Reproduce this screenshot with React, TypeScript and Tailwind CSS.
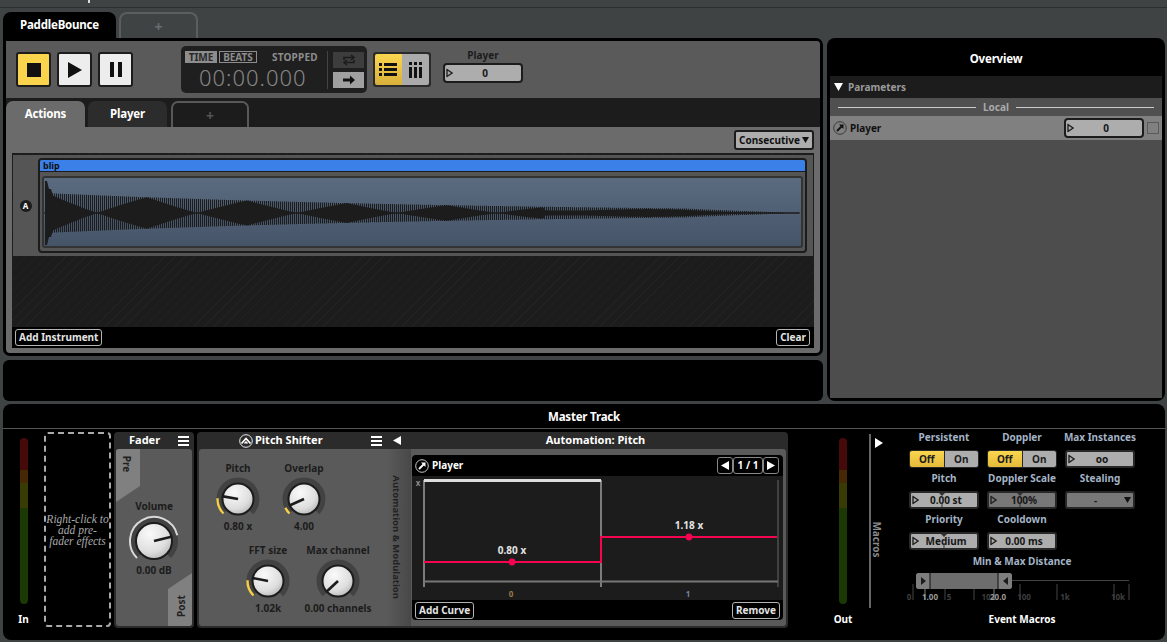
import React from "react";

const F = { fontFamily: '"Noto Sans", "Open Sans", sans-serif' };

function polar(r: number, deg: number) {
  const a = ((deg - 90) * Math.PI) / 180;
  return [r * Math.cos(a), r * Math.sin(a)];
}
function arc(r: number, from: number, to: number) {
  const [x1, y1] = polar(r, from);
  const [x2, y2] = polar(r, to);
  const large = Math.abs(to - from) > 180 ? 1 : 0;
  return `M${x1} ${y1}A${r} ${r} 0 ${large} 1 ${x2} ${y2}`;
}

function Knob({ id, angle, arcTo, big, color = "#f5cf45" }: { id: string; angle: number; arcTo?: number; big?: boolean; color?: string }) {
  const r = big ? 18 : 15.5;
  const tr = big ? 21 : 18.5;
  const [px, py] = polar(r + 1, angle);
  return (
    <svg width="54" height="54" viewBox="-27 -27 54 54" className="block">
      <defs>
        <radialGradient id={id} cx="0.38" cy="0.3" r="0.85">
          <stop offset="0" stopColor="#fafafa" />
          <stop offset="0.6" stopColor="#dedede" />
          <stop offset="1" stopColor="#a8a8a8" />
        </radialGradient>
      </defs>
      <path d={arc(tr, -135, 135)} fill="none" stroke="#424242" strokeWidth="6" />
      {arcTo !== undefined && <path d={arc(big ? 24 : 20.5, -135, arcTo)} fill="none" stroke={color} strokeWidth={big ? 2 : 2.4} />}
      <circle r={r} fill={`url(#${id})`} stroke="#1c1c1c" strokeWidth="2" />
      <line x1="0" y1="0" x2={px} y2={py} stroke="#1c1c1c" strokeWidth="2.6" />
    </svg>
  );
}

function Tri({ className = "" }: { className?: string }) {
  return (
    <svg width="7" height="9" viewBox="0 0 7 9" className={className}>
      <path d="M1 1L6 4.5L1 8Z" fill="none" stroke="#222" strokeWidth="1.4" />
    </svg>
  );
}

function Slider({ value, w, tall, dark, notch, round }: { value: string; w: string; tall?: boolean; dark?: boolean; notch?: number; round?: boolean }) {
  return (
    <div className={`${w} relative flex items-center justify-center ${tall ? "h-[20px]" : "h-[18px]"} ${round ? "rounded-[4px] border-2 border-[#1c1c1c]" : "rounded-[3px] border-2 border-[#282828]"} ${dark ? "bg-[#787878]" : "bg-[#adadad]"}`}>
      <Tri className="absolute left-[1px] top-1/2 -translate-y-1/2" />
      <span className="pl-[4px] text-[10px] font-bold leading-none text-[#161616]">{value}</span>
      {notch !== undefined && (
        <svg width="6" height="14" viewBox="0 0 6 14" className="absolute top-0" style={{ left: notch }}>
          <path d="M0 0H6L3 3Z" fill="#333" />
          <path d="M3 10V14" stroke="#333" />
        </svg>
      )}
    </div>
  );
}

function Toggle() {
  return (
    <div className="flex h-[18px] w-[70px] gap-[1px] rounded-[3px] bg-[#282828] p-[1px] text-[10px] font-bold leading-none">
      <div className="flex flex-1 items-center justify-center rounded-l-[2px] bg-gradient-to-b from-[#fbd64f] to-[#e4b93a] text-[#1c1c1c]">Off</div>
      <div className="flex flex-1 items-center justify-center rounded-r-[2px] bg-[#adadad] text-[#1c1c1c]">On</div>
    </div>
  );
}

function Meter() {
  return (
    <div className="flex h-[166px] w-[8px] flex-col overflow-hidden rounded-[4px]">
      <div className="h-[32px] bg-[#460a0a]" />
      <div className="h-[13px] bg-[#462806]" />
      <div className="h-[25px] bg-[#393b05]" />
      <div className="flex-1 bg-[#1c3805]" />
    </div>
  );
}

function LinkIcon({ dark, size = 14 }: { dark?: boolean; size?: number }) {
  const c = dark ? "#111" : "#fff";
  return (
    <svg width={size} height={size} viewBox="0 0 14 14" className="shrink-0">
      <circle cx="7" cy="7" r="6.3" fill="none" stroke={dark ? "#333" : "#ddd"} strokeWidth="0.9" />
      <path d="M4 10L8.5 5.5" stroke={c} strokeWidth="1.8" />
      <path d="M6 3.5H10.5V8Z" fill={c} />
    </svg>
  );
}

function Waveform() {
  const W = 756;
  const H = 70;
  const c = 35;
  const amp = (x: number) => {
    const a = 20 * Math.exp(-x / 430) * Math.min(1, Math.max(0, (760 - x) / 120));
    return Math.max(a, 0.3);
  };
  let stripes = "";
  for (let x = 6; x < 740; x += 2) {
    const a = amp(x);
    stripes += `M${x + 0.5} ${c - a}V${c + a}`;
  }
  const pts = (sign: number) => {
    const o: string[] = [];
    for (let x = 1; x < W; x += 2) {
      const a = amp(x);
      const p = (((x - 3) % 100) + 100) % 100;
      const tri = Math.abs(p - 50) / 50;
      const beat = x < 500 ? tri : 0.6 + 0.2 * Math.sin(x / 30);
      const v = x < 4 ? 32 : x < 8 ? 24 : Math.max(a * beat, 0.5);
      o.push(`${x} ${c + sign * v}`);
    }
    return o;
  };
  const top = pts(-1);
  const bot = pts(1).reverse();
  const solid = `M${top.join("L")}L${bot.join("L")}Z`;
  return (
    <svg width={W} height={H} viewBox={`0 0 ${W} ${H}`} className="block">
      <path d={stripes} stroke="#1c1c1c" strokeWidth="1.1" fill="none" />
      <path d={solid} fill="#1c1c1c" />
      <path d={`M0 ${c}H${W}`} stroke="#1c1c1c" strokeWidth="1" />
    </svg>
  );
}

function Graph() {
  return (
    <svg width="371" height="124" viewBox="0 0 371 124" className="block" fontFamily='"Noto Sans", sans-serif' fontWeight="700" fontSize="10">
      <rect width="371" height="124" fill="#1c1c1c" />
      <path d="M12 4.5H189" stroke="#dcdcdc" strokeWidth="3" />
      <path d="M12 4V111M189 4V111" stroke="#dcdcdc" strokeWidth="1" />
      <path d="M366 4V111" stroke="#666" strokeWidth="1" />
      <path d="M12 105.5H366" stroke="#777" strokeWidth="2" />
      <path d="M12 86H189V61H365" fill="none" stroke="#f5054f" strokeWidth="2" />
      <circle cx="100" cy="86" r="3.4" fill="#f5054f" />
      <circle cx="277" cy="61" r="3.4" fill="#f5054f" />
      <text x="100" y="78" textAnchor="middle" fill="#e4e4e4">0.80 x</text>
      <text x="277" y="53" textAnchor="middle" fill="#e4e4e4">1.18 x</text>
      <text x="6" y="10" textAnchor="middle" fill="#8a8a8a" fontSize="8">x</text>
      <text x="99" y="121" textAnchor="middle" fill="#99794a" fontSize="8">0</text>
      <text x="276" y="121" textAnchor="middle" fill="#6f8aa0" fontSize="8">1</text>
    </svg>
  );
}

function DistanceScale() {
  const ticks = [913, 925, 945, 974, 994, 1020, 1057, 1114, 1129];
  const labels: [string, number][] = [["0", 909], ["1.00", 930], ["5", 949], ["10", 986], ["20.0", 998], ["100", 1024], ["1k", 1065], ["10k", 1118]];
  return (
    <svg width="240" height="32" viewBox="905 571 240 32" className="block" fontFamily='"Noto Sans", sans-serif' fontSize="8" fontWeight="700">
      <path d="M1008 580.5H1129" stroke="#444" />
      {ticks.map((t) => (
        <path key={t} d={`M${t} 584V600`} stroke={t === 925 || t === 994 ? "#555" : "#2e2e2e"} strokeWidth="1.5" />
      ))}
      <rect x="916" y="573" width="96" height="16" rx="3" fill="#6d6d6d" />
      <rect x="916" y="573" width="14" height="16" rx="3" fill="#7e7e7e" />
      <rect x="998" y="573" width="14" height="16" rx="3" fill="#7e7e7e" />
      <path d="M930 573V589M998 573V589" stroke="#111" strokeWidth="1" />
      <path d="M921 577L926 581L921 585Z" fill="#1c1c1c" />
      <path d="M1008 577L1003 581L1008 585Z" fill="#1c1c1c" />
      {labels.map(([l, x]) => (
        <text key={l} x={x} y="600" textAnchor="middle" fill={l === "1.00" || l === "20.0" ? "#9a9a9a" : "#3f3f3f"}>{l}</text>
      ))}
    </svg>
  );
}

function Dial({ id, label, value, angle, arcTo }: { id: string; label: string; value: string; angle: number; arcTo?: number }) {
  return (
    <div className="flex w-[66px] flex-col items-center">
      <div className="h-[14px] whitespace-nowrap text-[10px] font-bold leading-[14px] text-[#1c1c1c]">{label}</div>
      <div className="mb-[-7px] mt-[-3px]"><Knob id={id} angle={angle} arcTo={arcTo} /></div>
      <div className="relative h-[14px] whitespace-nowrap text-[10px] font-bold leading-[14px] text-[#1c1c1c]">{value}</div>
    </div>
  );
}

function Cell({ label, children }: { label: string; children?: React.ReactNode }) {
  return (
    <div className="flex h-[41px] w-[78px] flex-col items-center">
      <div className="mb-[5px] flex h-[15px] items-center whitespace-nowrap text-[10px] font-bold text-[#a4b4c6]">{label}</div>
      {children}
    </div>
  );
}

function Hamburger() {
  return (
    <div className="flex w-[11px] shrink-0 flex-col gap-[2px]">
      <div className="h-[2px] bg-white" />
      <div className="h-[2px] bg-white" />
      <div className="h-[2px] bg-white" />
    </div>
  );
}

function SmallBtn({ children }: { children: React.ReactNode }) {
  return <div className="flex h-[17px] items-center rounded-[3px] border border-[#b4b4b4] bg-black px-[3px] text-[10px] font-bold text-[#e4e4e4]">{children}</div>;
}

export default function App() {
  return (
    <div style={F} className="flex h-[642px] w-[1167px] flex-col overflow-hidden bg-[#3f4344]">
      <div className="h-[8px] shrink-0 border-b border-[#2c2f30]">
        <div className="ml-[88px] h-[3px] w-[2px] bg-[#ddd]" />
      </div>

      <div className="mt-[4px] flex h-[26px] shrink-0 gap-[3px] pl-[3px]">
        <div className="flex w-[113px] items-center justify-center rounded-t-[8px] bg-black text-[11.5px] font-bold tracking-[-0.2px] text-white">PaddleBounce</div>
        <div className="flex w-[79px] items-center justify-center rounded-t-[8px] border-2 border-b-0 border-[#5a5e5f] text-[14px] font-bold text-[#6a6e6f]">+</div>
      </div>

      <div className="flex h-[363px] shrink-0 gap-[4px] pl-[3px]">
        <div className="flex w-[820px] flex-col gap-[4px]">
          <div className="flex h-[318px] flex-col overflow-hidden rounded-[7px] rounded-tl-none border-[3px] border-black bg-[#6b6b6b]">
            <div className="flex h-[57px] shrink-0 items-center bg-[#5a5a5a] pl-[10px]">
              <div className="flex h-[35px] w-[35px] items-center justify-center rounded-[3px] border-2 border-[#1c1c1c] bg-[#f9d44c]">
                <div className="h-[14px] w-[14px] bg-[#111]" />
              </div>
              <div className="ml-[6px] flex h-[35px] w-[35px] items-center justify-center rounded-[3px] border-2 border-[#1c1c1c] bg-[#ededed]">
                <svg width="16" height="18" viewBox="0 0 16 18"><path d="M1 1L15 9L1 17Z" fill="#111" /></svg>
              </div>
              <div className="ml-[6px] flex h-[35px] w-[35px] items-center justify-center gap-[4px] rounded-[3px] border-2 border-[#1c1c1c] bg-[#ededed]">
                <div className="h-[15px] w-[4px] bg-[#111]" />
                <div className="h-[15px] w-[4px] bg-[#111]" />
              </div>

              <div className="ml-[48px] flex h-[47px] w-[186px] items-center rounded-[5px] bg-[#1f1f1f] pl-[4px]">
                <div className="w-[142px] pt-[2px]">
                  <div className="flex items-center text-[10px] font-bold leading-none">
                    <div className="flex h-[12px] w-[32px] items-center justify-center bg-[#8d8d8d] text-[#2a2a2a]">TIME</div>
                    <div className="ml-[2px] flex h-[12px] w-[38px] items-center justify-center border border-[#8d8d8d] text-[#8d8d8d]">BEATS</div>
                    <div className="ml-[15px] tracking-[0.2px] text-[#8d8d8d]">STOPPED</div>
                  </div>
                  <div className="pl-[14px] text-[22px] font-light leading-[28px] tracking-[1px] text-[#868686]">00:00.000</div>
                </div>
                <div className="h-[38px] w-px bg-[#444]" />
                <div className="ml-[5px] flex flex-col gap-[4px]">
                  <div className="flex h-[16px] w-[31px] items-center justify-center bg-[#3d3d3d]">
                    <svg width="14" height="12" viewBox="0 0 14 12" fill="none" stroke="#1c1c1c" strokeWidth="1.6">
                      <path d="M2 6V3.5H11M9 1L12 3.5L9 6M12 6V8.5H3M5 6L2 8.5L5 11" />
                    </svg>
                  </div>
                  <div className="flex h-[16px] w-[31px] items-center justify-center bg-[#a0a0a0]">
                    <svg width="14" height="10" viewBox="0 0 14 10"><path d="M1 3.5H8V0.5L13 5L8 9.5V6.5H1Z" fill="#111" /></svg>
                  </div>
                </div>
              </div>

              <div className="ml-[6px] flex h-[35px] w-[58px] rounded-[3px] bg-[#2a2a2a] p-[2px]">
                <div className="flex w-[27px] flex-col justify-center gap-[2px] rounded-l-[2px] bg-gradient-to-b from-[#fbd64f] to-[#d8b03a] pl-[4px]">
                  {[0, 1, 2].map((i) => (
                    <div key={i} className="flex gap-[2px]">
                      <div className="h-[3px] w-[3px] bg-[#111]" />
                      <div className="h-[3px] w-[13px] bg-[#111]" />
                    </div>
                  ))}
                </div>
                <div className="flex flex-1 items-center justify-center gap-[2px] rounded-r-[2px] bg-[#ababab]">
                  {[0, 1, 2].map((i) => (
                    <div key={i} className="flex flex-col gap-[2px]">
                      <div className="h-[3px] w-[3px] bg-[#111]" />
                      <div className="h-[11px] w-[3px] bg-[#111]" />
                    </div>
                  ))}
                </div>
              </div>

              <div className="mb-[9px] ml-[12px] flex w-[80px] flex-col items-center">
                <div className="h-[15px] text-[10px] font-bold leading-[15px] text-[#1c1c1c]">Player</div>
                <Slider value="0" w="w-[80px]" tall round />
              </div>
            </div>

            <div className="flex h-[29px] shrink-0 items-end gap-[3px] bg-[#1c1c1c]">
              <div className="flex h-[26px] w-[79px] items-center justify-center rounded-t-[7px] bg-[#6b6b6b] text-[11.5px] font-bold tracking-[-0.2px] text-white">Actions</div>
              <div className="flex h-[26px] w-[79px] items-center justify-center rounded-t-[7px] bg-[#2c2c2c] text-[11.5px] font-bold tracking-[-0.2px] text-white">Player</div>
              <div className="ml-[1px] flex h-[26px] w-[78px] items-center justify-center rounded-t-[7px] border-2 border-b-0 border-[#585858] text-[14px] font-bold text-[#555]">+</div>
            </div>

            <div className="flex h-[26px] shrink-0 items-center justify-end pr-[6px]">
              <div className="flex h-[20px] w-[80px] items-center justify-center gap-[2px] rounded-[3px] border-2 border-[#1c1c1c] bg-[#adadad] text-[10px] font-bold text-[#111]">
                Consecutive
                <svg width="7" height="6" viewBox="0 0 7 6"><path d="M0 0H7L3.5 6Z" fill="#111" /></svg>
              </div>
            </div>

            <div className="mx-[6px] flex h-[195px] flex-col bg-[#1c1c1c] bg-[repeating-linear-gradient(135deg,#1c1c1c_0,#1c1c1c_6px,#212121_6px,#212121_7px)]">
              <div className="mx-[1px] mt-[2px] flex h-[101px] shrink-0 items-center bg-[#555] pr-[6px]">
                <div className="flex w-[25px] justify-center">
                  <div className="flex h-[12px] w-[12px] items-center justify-center rounded-full bg-[#1c1c1c] text-[8px] font-bold text-white">A</div>
                </div>
                <div className="flex h-[95px] flex-1 flex-col overflow-hidden rounded-[4px] border-2 border-[#1c1c1c] bg-[#555]">
                  <div className="flex h-[12px] shrink-0 items-center border-b border-[#1c1c1c] bg-[#3a80e8] pl-[3px] text-[9px] font-bold text-[#111]">blip</div>
                  <div className="mx-[2px] mt-[4px] h-[72px] overflow-hidden rounded-[3px] border-2 border-[#333] bg-gradient-to-b from-[#5a6b80] to-[#465468]">
                    <Waveform />
                  </div>
                </div>
              </div>
              <div className="flex-1" />
              <div className="flex h-[21px] shrink-0 items-center justify-between bg-black pl-[3px] pr-[4px]">
                <SmallBtn>Add Instrument</SmallBtn>
                <SmallBtn>Clear</SmallBtn>
              </div>
            </div>
          </div>
          <div className="h-[41px] rounded-[6px] bg-black" />
        </div>

        <div className="flex w-[338px] flex-col overflow-hidden rounded-[8px] bg-black px-[3px] pb-[3px]">
          <div className="flex h-[38px] shrink-0 items-center justify-center pt-[4px] text-[11.5px] font-bold tracking-[-0.2px] text-white">Overview</div>
          <div className="flex h-[22px] shrink-0 items-center gap-[5px] bg-[#1c1c1c] pl-[4px] text-[10px] font-bold text-[#9a9a9a]">
            <svg width="9" height="8" viewBox="0 0 9 8"><path d="M0 0H9L4.5 8Z" fill="#fff" /></svg>
            Parameters
          </div>
          <div className="flex h-[18px] shrink-0 items-center gap-[7px] bg-[#505050] px-[8px] text-[10px] font-bold text-[#aaa]">
            <div className="h-px flex-1 bg-[#ccc]" />
            Local
            <div className="h-px flex-1 bg-[#ccc]" />
          </div>
          <div className="flex h-[24px] shrink-0 items-center bg-[#808080] pl-[3px]">
            <LinkIcon dark />
            <span className="ml-[3px] text-[10px] font-bold text-[#111]">Player</span>
            <div className="ml-auto"><Slider value="0" w="w-[80px]" tall round /></div>
            <div className="ml-[3px] mr-[3px] h-[12px] w-[12px] border border-[#5a5a5a]" />
          </div>
          <div className="flex-1 bg-[#4d4d4d]" />
        </div>
      </div>

      <div className="ml-[3px] mt-[3px] flex h-[236px] w-[1162px] shrink-0 flex-col rounded-[8px] bg-black">
        <div className="flex h-[25px] shrink-0 items-center justify-center border-b border-[#555] pt-[2px] text-[11.5px] font-bold tracking-[-0.2px] text-white">Master Track</div>
        <div className="flex flex-1 pt-[3px]">
          <div className="flex w-[41px] shrink-0 flex-col items-center pt-[6px]">
            <Meter />
            <div className="mt-[8px] text-[10px] font-bold text-white">In</div>
          </div>

          <div className="flex h-[195px] w-[67px] shrink-0 items-center justify-center rounded-[4px] border-2 border-dashed border-[#aaa] pt-[2px] text-center font-['Liberation_Serif',serif] text-[11.5px] italic leading-[11px] text-[#aaa]">
            <span className="whitespace-nowrap">Right-click to<br />add pre-<br />fader effects</span>
          </div>

          <div className="ml-[3px] flex h-[196px] w-[80px] shrink-0 flex-col rounded-[4px] bg-[#2b2b2b] px-[2px] pb-[2px]">
            <div className="flex h-[17px] shrink-0 items-center justify-between pl-[13px] pr-[3px] text-[11px] font-bold text-white">
              Fader
              <Hamburger />
            </div>
            <div className="relative flex flex-1 flex-col items-center overflow-hidden rounded-[3px] bg-[#5a5a5a]">
              <div className="absolute left-0 top-0 h-[53px] w-[24px] bg-[#808080] [clip-path:polygon(0_0,100%_0,100%_70%,0_100%)]" />
              <div className="absolute left-[3px] top-[9px] rotate-90 text-[10px] font-bold leading-[12px] text-[#222]">Pre</div>
              <div className="absolute bottom-0 right-0 h-[53px] w-[24px] bg-[#808080] [clip-path:polygon(100%_0,100%_100%,0_100%,0_30%)]" />
              <div className="absolute bottom-[14px] right-0 -rotate-90 text-[10px] font-bold leading-[12px] text-[#222]">Post</div>
              <div className="relative mt-[50px] text-[10px] font-bold leading-[14px] text-[#1c1c1c]">Volume</div>
              <div className="relative mb-[-5px] mt-[1px]"><Knob id="kv" angle={76} arcTo={76} big color="#d8d8d8" /></div>
              <div className="relative text-[10px] font-bold leading-[14px] text-[#1c1c1c]">0.00 dB</div>
            </div>
          </div>

          <div className="ml-[3px] flex h-[196px] w-[591px] shrink-0 flex-col rounded-[4px] bg-[#2b2b2b] px-[2px] pb-[2px]">
            <div className="flex h-[17px] shrink-0 items-center text-[11px] font-bold text-white">
              <div className="flex w-[188px] items-center gap-[2px] pl-[40px] pr-[5px]">
                <svg width="14" height="14" viewBox="0 0 14 14" fill="none" stroke="#fff" className="shrink-0">
                  <circle cx="7" cy="7" r="6.3" strokeWidth="0.9" />
                  <path d="M2.5 9.5L7 4.5L11.5 9.5" strokeWidth="1.8" />
                  <path d="M5.5 9.5L7 8L8.5 9.5" strokeWidth="1.4" />
                </svg>
                <span className="flex-1 whitespace-nowrap">Pitch Shifter</span>
                <Hamburger />
              </div>
              <div className="flex w-[24px] justify-center pr-[4px]">
                <svg width="8" height="9" viewBox="0 0 8 9"><path d="M8 0V9L0 4.5Z" fill="#fff" /></svg>
              </div>
              <div className="flex-1 pr-[6px] text-center">Automation: Pitch</div>
            </div>
            <div className="flex flex-1 overflow-hidden rounded-[3px] bg-[#5a5a5a]">
              <div className="flex w-[188px] shrink-0 flex-col gap-[10px] pt-[12px]">
                <div className="flex pl-[6px]"><Dial id="k1" label="Pitch" value="0.80 x" angle={-80} arcTo={-88} /><Dial id="k2" label="Overlap" value="4.00" angle={-114} arcTo={-115} /></div>
                <div className="flex pl-[36px]"><Dial id="k3" label="FFT size" value="1.02k" angle={-79} arcTo={-88} /><div className="w-[4px]" /><Dial id="k4" label="Max channel" value="0.00 channels" angle={-133} /></div>
              </div>
              <div className="flex w-[24px] shrink-0 items-center justify-center bg-gradient-to-r from-[#5a5a5a] to-[#484848] pr-[6px]">
                <span className="rotate-90 whitespace-nowrap text-[9.5px] font-bold text-[#222]">Automation &amp; Modulation</span>
              </div>
              <div className="flex flex-1 items-center pl-[1px] pr-[2px]">
                <div className="flex h-[165px] w-[371px] flex-col rounded-[4px] bg-black">
                  <div className="flex h-[21px] shrink-0 items-center pl-[3px] pr-[4px]">
                    <LinkIcon />
                    <span className="ml-[3px] text-[10px] font-bold text-white">Player</span>
                    <div className="ml-auto flex h-[17px] items-stretch text-[10px] font-bold text-white">
                      <div className="flex w-[16px] items-center justify-center rounded-[3px] border border-[#888]"><svg width="8" height="9" viewBox="0 0 8 9"><path d="M8 0V9L0 4.5Z" fill="#fff" /></svg></div>
                      <div className="flex w-[30px] items-center justify-center rounded-[3px] border border-[#888]">1 / 1</div>
                      <div className="flex w-[16px] items-center justify-center rounded-[3px] border border-[#888]"><svg width="8" height="9" viewBox="0 0 8 9"><path d="M0 0V9L8 4.5Z" fill="#fff" /></svg></div>
                    </div>
                  </div>
                  <Graph />
                  <div className="flex flex-1 items-center justify-between px-[3px]">
                    <SmallBtn>Add Curve</SmallBtn>
                    <SmallBtn>Remove</SmallBtn>
                  </div>
                </div>
              </div>
            </div>
          </div>

          <div className="flex w-[90px] shrink-0 flex-col items-center pl-[20px] pt-[6px]">
            <Meter />
            <div className="mt-[8px] text-[10px] font-bold text-white">Out</div>
          </div>

          <div className="ml-[-9px] mt-[2px] h-[174px] w-[2px] shrink-0 bg-[#666]" />

          <div className="flex w-[34px] shrink-0 flex-col items-start pl-[4px] pt-[6px]">
            <svg width="8" height="10" viewBox="0 0 8 10"><path d="M0 0V10L8 5Z" fill="#fff" /></svg>
            <div className="ml-[-3px] mt-[71px] flex h-[40px] w-[8px] items-center justify-center">
              <span className="rotate-90 text-[10px] font-bold text-[#8a8a8a]">Macros</span>
            </div>
          </div>

          <div className="mt-[-2px] flex w-[240px] shrink-0 flex-col">
            <div className="grid w-[234px] grid-cols-[78px_78px_78px]">
              <Cell label="Persistent"><Toggle /></Cell>
              <Cell label="Doppler"><Toggle /></Cell>
              <Cell label="Max Instances"><Slider value="oo" w="w-[70px]" /></Cell>
              <Cell label="Pitch"><Slider value="0.00 st" w="w-[70px]" notch={28} /></Cell>
              <Cell label="Doppler Scale"><Slider value="100%" w="w-[70px]" dark notch={28} /></Cell>
              <Cell label="Stealing">
                <div className="flex h-[18px] w-[70px] items-center rounded-[3px] border-2 border-[#282828] bg-[#787878] text-[10px] font-bold text-[#222]">
                  <span className="flex-1 text-center">-</span>
                  <svg width="7" height="6" viewBox="0 0 7 6" className="mr-[2px]"><path d="M0 0H7L3.5 6Z" fill="#111" /></svg>
                </div>
              </Cell>
              <Cell label="Priority"><Slider value="Medium" w="w-[70px]" notch={30} /></Cell>
              <Cell label="Cooldown"><Slider value="0.00 ms" w="w-[70px]" /></Cell>
              <div />
            </div>
            <div className="w-[234px] pt-[1px] text-center text-[10px] font-bold leading-[15px] text-[#a4b4c6]">Min &amp; Max Distance</div>
            <div className="mt-[2px]"><DistanceScale /></div>
            <div className="mt-[9px] w-[234px] text-center text-[10px] font-bold text-white">Event Macros</div>
          </div>
        </div>
      </div>
    </div>
  );
}
